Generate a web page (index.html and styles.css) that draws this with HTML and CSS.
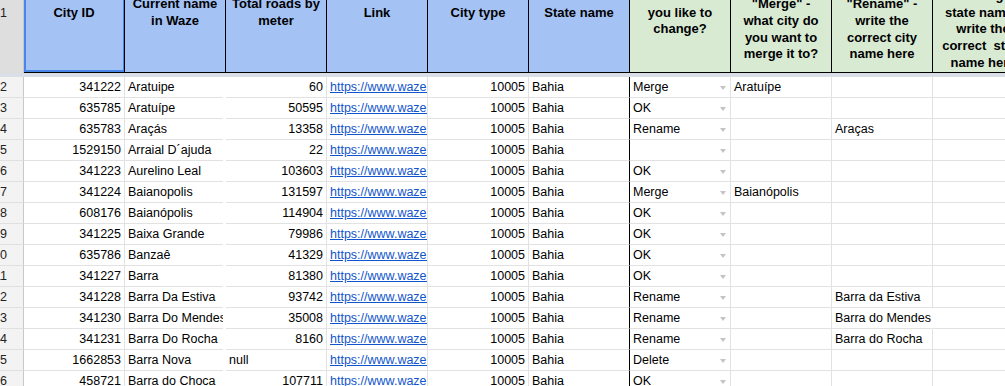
FILE: index.html
```html
<!DOCTYPE html>
<html>
<head>
<meta charset="utf-8">
<link rel="stylesheet" href="styles.css">
</head>
<body>
<div class="sheet">
  <div class="head">
    <div class="head-row">
      <div class="rh rh-head"><span>1</span></div>
      <div class="hc blue sel"><div class="ht">City ID</div></div>
      <div class="hc blue"><div class="ht">Current name<br>in Waze</div></div>
      <div class="hc blue"><div class="ht">Total roads by<br>meter</div></div>
      <div class="hc blue"><div class="ht">Link</div></div>
      <div class="hc blue"><div class="ht">City type</div></div>
      <div class="hc blue"><div class="ht">State name</div></div>
      <div class="hc green"><div class="ht">What would<br>you like to<br>change?</div></div>
      <div class="hc green"><div class="ht">If you<br>selected<br>"Merge" -<br>what city do<br>you want to<br>merge it to?</div></div>
      <div class="hc green"><div class="ht">If you<br>selected<br>"Rename" -<br>write the<br>correct city<br>name here</div></div>
      <div class="hc green"><div class="ht">If you<br>selected<br>Wrong<br>state name -<br>write the<br>correct&nbsp; state<br>name here</div></div>
    </div>
  </div>
  <div class="band"></div>
  <div class="rows">
    <div class="row"><div class="rh"><span>2</span></div><div class="c r">341222</div><div class="c">Aratuipe</div><div class="c r">60</div><div class="c"><a class="link">https://www.waze.com/editor?cityId=341222</a></div><div class="c r">10005</div><div class="c">Bahia</div><div class="c dd">Merge<i class="arrow"></i></div><div class="c">Aratuípe</div><div class="c"></div><div class="c"></div></div>
    <div class="row"><div class="rh"><span>3</span></div><div class="c r">635785</div><div class="c">Aratuípe</div><div class="c r">50595</div><div class="c"><a class="link">https://www.waze.com/editor?cityId=635785</a></div><div class="c r">10005</div><div class="c">Bahia</div><div class="c dd">OK<i class="arrow"></i></div><div class="c"></div><div class="c"></div><div class="c"></div></div>
    <div class="row"><div class="rh"><span>4</span></div><div class="c r">635783</div><div class="c">Araçás</div><div class="c r">13358</div><div class="c"><a class="link">https://www.waze.com/editor?cityId=635783</a></div><div class="c r">10005</div><div class="c">Bahia</div><div class="c dd">Rename<i class="arrow"></i></div><div class="c"></div><div class="c">Araças</div><div class="c"></div></div>
    <div class="row"><div class="rh"><span>5</span></div><div class="c r">1529150</div><div class="c">Arraial D´ajuda</div><div class="c r">22</div><div class="c"><a class="link">https://www.waze.com/editor?cityId=1529150</a></div><div class="c r">10005</div><div class="c">Bahia</div><div class="c dd"><i class="arrow"></i></div><div class="c"></div><div class="c"></div><div class="c"></div></div>
    <div class="row"><div class="rh"><span>6</span></div><div class="c r">341223</div><div class="c">Aurelino Leal</div><div class="c r">103603</div><div class="c"><a class="link">https://www.waze.com/editor?cityId=341223</a></div><div class="c r">10005</div><div class="c">Bahia</div><div class="c dd">OK<i class="arrow"></i></div><div class="c"></div><div class="c"></div><div class="c"></div></div>
    <div class="row"><div class="rh"><span>7</span></div><div class="c r">341224</div><div class="c">Baianopolis</div><div class="c r">131597</div><div class="c"><a class="link">https://www.waze.com/editor?cityId=341224</a></div><div class="c r">10005</div><div class="c">Bahia</div><div class="c dd">Merge<i class="arrow"></i></div><div class="c">Baianópolis</div><div class="c"></div><div class="c"></div></div>
    <div class="row"><div class="rh"><span>8</span></div><div class="c r">608176</div><div class="c">Baianópolis</div><div class="c r">114904</div><div class="c"><a class="link">https://www.waze.com/editor?cityId=608176</a></div><div class="c r">10005</div><div class="c">Bahia</div><div class="c dd">OK<i class="arrow"></i></div><div class="c"></div><div class="c"></div><div class="c"></div></div>
    <div class="row"><div class="rh"><span>9</span></div><div class="c r">341225</div><div class="c">Baixa Grande</div><div class="c r">79986</div><div class="c"><a class="link">https://www.waze.com/editor?cityId=341225</a></div><div class="c r">10005</div><div class="c">Bahia</div><div class="c dd">OK<i class="arrow"></i></div><div class="c"></div><div class="c"></div><div class="c"></div></div>
    <div class="row"><div class="rh"><span>10</span></div><div class="c r">635786</div><div class="c">Banzaê</div><div class="c r">41329</div><div class="c"><a class="link">https://www.waze.com/editor?cityId=635786</a></div><div class="c r">10005</div><div class="c">Bahia</div><div class="c dd">OK<i class="arrow"></i></div><div class="c"></div><div class="c"></div><div class="c"></div></div>
    <div class="row"><div class="rh"><span>11</span></div><div class="c r">341227</div><div class="c">Barra</div><div class="c r">81380</div><div class="c"><a class="link">https://www.waze.com/editor?cityId=341227</a></div><div class="c r">10005</div><div class="c">Bahia</div><div class="c dd">OK<i class="arrow"></i></div><div class="c"></div><div class="c"></div><div class="c"></div></div>
    <div class="row"><div class="rh"><span>12</span></div><div class="c r">341228</div><div class="c">Barra Da Estiva</div><div class="c r">93742</div><div class="c"><a class="link">https://www.waze.com/editor?cityId=341228</a></div><div class="c r">10005</div><div class="c">Bahia</div><div class="c dd">Rename<i class="arrow"></i></div><div class="c"></div><div class="c">Barra da Estiva</div><div class="c"></div></div>
    <div class="row"><div class="rh"><span>13</span></div><div class="c r">341230</div><div class="c">Barra Do Mendes</div><div class="c r">35008</div><div class="c"><a class="link">https://www.waze.com/editor?cityId=341230</a></div><div class="c r">10005</div><div class="c">Bahia</div><div class="c dd">Rename<i class="arrow"></i></div><div class="c"></div><div class="c spill">Barra do Mendes</div><div class="c"></div></div>
    <div class="row"><div class="rh"><span>14</span></div><div class="c r">341231</div><div class="c">Barra Do Rocha</div><div class="c r">8160</div><div class="c"><a class="link">https://www.waze.com/editor?cityId=341231</a></div><div class="c r">10005</div><div class="c">Bahia</div><div class="c dd">Rename<i class="arrow"></i></div><div class="c"></div><div class="c">Barra do Rocha</div><div class="c"></div></div>
    <div class="row"><div class="rh"><span>15</span></div><div class="c r">1662853</div><div class="c">Barra Nova</div><div class="c">null</div><div class="c"><a class="link">https://www.waze.com/editor?cityId=1662853</a></div><div class="c r">10005</div><div class="c">Bahia</div><div class="c dd">Delete<i class="arrow"></i></div><div class="c"></div><div class="c"></div><div class="c"></div></div>
    <div class="row"><div class="rh"><span>16</span></div><div class="c r">458721</div><div class="c">Barra do Choca</div><div class="c r">107711</div><div class="c"><a class="link">https://www.waze.com/editor?cityId=458721</a></div><div class="c r">10005</div><div class="c">Bahia</div><div class="c dd">OK<i class="arrow"></i></div><div class="c"></div><div class="c"></div><div class="c"></div></div>
  </div>
</div>
</body>
</html>
```

FILE: styles.css
```css
* { box-sizing: border-box; }
html, body { margin: 0; padding: 0; background: #fff; }
body {
  font-family: "Liberation Sans", Arial, sans-serif;
  color: #000;
  width: 1005px;
  height: 386px;
  overflow: hidden;
}
.sheet {
  width: 1005px;
  height: 386px;
  overflow: hidden;
}
.head {
  height: 73px;
  overflow: hidden;
}
.head-row {
  display: grid;
  grid-template-columns: 24px repeat(10, 101px);
  height: 121px;
  margin-top: -48px;
  width: 1034px;
}
.rh {
  display: flex;
  justify-content: flex-end;
  align-items: center;
  padding-right: 16px;
  background: #f3f3f3;
  border-right: 1px solid #c8c8c8;
  border-bottom: 1px solid #e0e0e0;
  font-size: 12.5px;
  color: #222;
  overflow: hidden;
  white-space: nowrap;
}
.rh-head {
  background: #dedede;
  border-bottom: none;
}
.hc {
  display: flex;
  align-items: center;
  justify-content: center;
  border-right: 1px solid #000;
  border-bottom: 1px solid #000;
  overflow: hidden;
  position: relative;
  padding-top: 2px;
}
.blue { background: #a4c2f4; }
.green { background: #d9ead3; }
.ht {
  font-weight: bold;
  font-size: 13px;
  line-height: 16.7px;
  text-align: center;
  white-space: pre;
}
.sel::after {
  content: "";
  position: absolute;
  left: 0;
  right: -1px;
  top: 0;
  bottom: 0;
  border: 2px solid #4a86e8;
}
.band {
  height: 4px;
  background: #dadee6;
}
.rows {
  width: 1034px;
}
.row {
  display: grid;
  grid-template-columns: 24px repeat(10, 101px);
  height: 21px;
}
.c {
  border-right: 1px solid #e2e2e2;
  border-bottom: 1px solid #e2e2e2;
  font-size: 12.5px;
  line-height: 20px;
  padding: 0 3px;
  white-space: nowrap;
  overflow: hidden;
  position: relative;
}
.c.r { text-align: right; }
.c:nth-child(3) { clip-path: inset(0 3px 0 0); }
.c:nth-child(7) { border-right-color: #000; }
.c.spill {
  overflow: visible;
  border-right-color: transparent;
  z-index: 1;
}
.link {
  color: #1155cc;
  text-decoration: underline;
}
.arrow {
  position: absolute;
  right: 4px;
  top: 9px;
  width: 0;
  height: 0;
  border-left: 3px solid transparent;
  border-right: 3px solid transparent;
  border-top: 4px solid #c4c4c4;
}
```
